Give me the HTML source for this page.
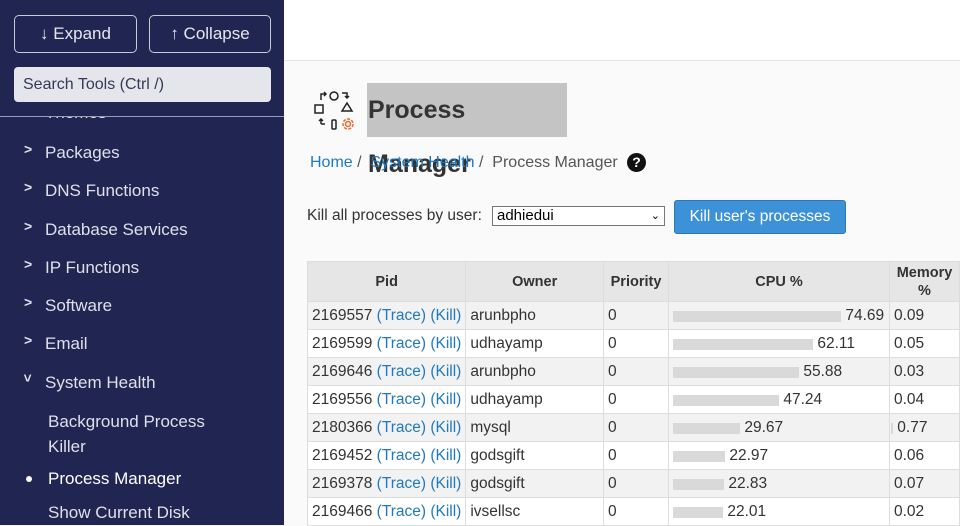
<!DOCTYPE html>
<html><head><style>
*{box-sizing:border-box;margin:0;padding:0}
body{width:960px;height:525px;overflow:hidden;font-family:"Liberation Sans",sans-serif;background:#fafafa;position:relative}
#sb{position:absolute;left:0;top:0;width:284px;height:525px;background:#202552;color:#e6e7ee;overflow:hidden}
.btn{position:absolute;top:15px;height:38px;border:1px solid #c9cbd8;border-radius:5px;color:#e6e7ee;font-size:17px;line-height:36px;text-align:center}
#search{position:absolute;left:14px;top:67px;width:257px;height:35px;background:#e5e6eb;border-radius:4px;color:#333a5a;font-size:16px;line-height:35px;padding-left:9px}
.it{position:absolute;left:45px;font-size:17px;color:#dfe0e8}
.ch{position:absolute;left:24px;font-size:14px;color:#dfe0e8;font-weight:bold}
#hdr{position:absolute;left:284px;top:0;width:676px;height:61px;background:#fff;border-bottom:1px solid #e4e4e4}
table{position:absolute;left:307px;top:261px;border-collapse:collapse;font-size:15.5px;color:#333}
td,th{border:1px solid #ddd;height:28px;padding:0 4px;white-space:nowrap}
th{background:#e6e6e6;font-size:14.5px;height:40px;color:#333}
tr:nth-child(even) td{background:#f2f2f2}
tr:nth-child(odd) td{background:#fff}
a{color:#1f7ac0;text-decoration:none}
.bar{display:inline-block;height:11px;background:#d9d9d9;vertical-align:top;margin-top:4px}
</style></head><body>
<div id="sb">
<div class="btn" style="left:14px;width:123px">↓ Expand</div>
<div class="btn" style="left:149px;width:122px">↑ Collapse</div>
<div id="search">Search Tools (Ctrl /)</div>
<div style="position:absolute;left:0;top:116px;width:284px;height:1px;background:#9a9db5"></div>
<div style="position:absolute;top:117px;left:0;width:284px;height:420px;overflow:hidden">
<div class="ch" style="top:-16px">›</div><div class="it" style="top:-14px">Themes</div>
</div>
<div class="ch" style="top:141px">&gt;</div><div class="it" style="top:143px">Packages</div>
<div class="ch" style="top:179px">&gt;</div><div class="it" style="top:181px">DNS Functions</div>
<div class="ch" style="top:218px">&gt;</div><div class="it" style="top:220px">Database Services</div>
<div class="ch" style="top:256px">&gt;</div><div class="it" style="top:258px">IP Functions</div>
<div class="ch" style="top:294px">&gt;</div><div class="it" style="top:296px">Software</div>
<div class="ch" style="top:332px">&gt;</div><div class="it" style="top:334px">Email</div>
<div class="ch" style="top:370px;transform:rotate(90deg)">&gt;</div><div class="it" style="top:373px">System Health</div>
<div class="it" style="top:409px;left:48px;line-height:25px">Background Process<br>Killer</div>
<div style="position:absolute;left:26px;top:476px;width:6px;height:6px;border-radius:50%;background:#fff"></div>
<div class="it" style="top:469px;left:48px;color:#fff">Process Manager</div>
<div class="it" style="top:503px;left:48px">Show Current Disk</div>
</div>
<div id="hdr"></div>
<svg style="position:absolute;left:312px;top:88px" width="46" height="46" viewBox="0 0 46 46" fill="none" stroke="#222" stroke-width="1.5">
<circle cx="22" cy="8" r="4"/><path d="M9 12V6h5M12 4l2 2-2 2"/><path d="M30 5h5v5M33 8l2 2 2-2"/>
<rect x="3" y="17" width="8" height="8"/><path d="M35 15l-5 8h10z"/>
<path d="M9 36v-5M7 33l2-2 2 2M9 36h4"/><rect x="20" y="32" width="4" height="9" rx="1"/>
<circle cx="36" cy="36" r="2.5" stroke="#e8692b"/><circle cx="36" cy="36" r="5" stroke="#e8692b" stroke-dasharray="3 1.5"/>
</svg>
<div style="position:absolute;left:367px;top:83px;width:200px;height:54px;background:#c4c4c4;font-size:25px;font-weight:bold;color:#333;line-height:54px;padding-left:1px">Process Manager</div>
<div style="position:absolute;left:310px;top:154px;font-size:16px;color:#555"><a>Home</a> / &nbsp;<a>System Health</a> / &nbsp;Process Manager</div>
<div style="position:absolute;left:627px;top:153px;width:19px;height:19px;border-radius:50%;background:#111;color:#fff;font-size:14px;font-weight:bold;text-align:center;line-height:19px">?</div>
<div style="position:absolute;left:307px;top:207px;font-size:15.5px;color:#333">Kill all processes by user:</div>
<div style="position:absolute;left:492px;top:206px;width:173px;height:20px;border:1px solid #777;background:#fff;font-size:15px;line-height:18px;padding-left:4px;color:#000">adhiedui<span style="position:absolute;right:4px;font-size:11px">⌄</span></div>
<div style="position:absolute;left:674px;top:200px;width:172px;height:34px;background:#3d91d6;border:1px solid #2b78b8;border-radius:3px;color:#fff;font-size:15.5px;text-align:center;line-height:32px">Kill user's processes</div>
<table>
<tr><th style="width:158px">Pid</th><th style="width:138px">Owner</th><th style="width:65px">Priority</th><th style="width:221px">CPU %</th><th style="width:70px;line-height:18px">Memory<br>%</th></tr>
<tr><td>2169557 <a>(Trace)</a> <a>(Kill)</a></td><td>arunbpho</td><td>0</td><td><span class="bar" style="width:168px"></span> 74.69</td><td>0.09</td></tr>
<tr><td>2169599 <a>(Trace)</a> <a>(Kill)</a></td><td>udhayamp</td><td>0</td><td><span class="bar" style="width:140px"></span> 62.11</td><td>0.05</td></tr>
<tr><td>2169646 <a>(Trace)</a> <a>(Kill)</a></td><td>arunbpho</td><td>0</td><td><span class="bar" style="width:126px"></span> 55.88</td><td>0.03</td></tr>
<tr><td>2169556 <a>(Trace)</a> <a>(Kill)</a></td><td>udhayamp</td><td>0</td><td><span class="bar" style="width:106px"></span> 47.24</td><td>0.04</td></tr>
<tr><td>2180366 <a>(Trace)</a> <a>(Kill)</a></td><td>mysql</td><td>0</td><td><span class="bar" style="width:67px"></span> 29.67</td><td><span class="bar" style="width:2px;margin-left:-3px"></span> 0.77</td></tr>
<tr><td>2169452 <a>(Trace)</a> <a>(Kill)</a></td><td>godsgift</td><td>0</td><td><span class="bar" style="width:52px"></span> 22.97</td><td>0.06</td></tr>
<tr><td>2169378 <a>(Trace)</a> <a>(Kill)</a></td><td>godsgift</td><td>0</td><td><span class="bar" style="width:51px"></span> 22.83</td><td>0.07</td></tr>
<tr><td>2169466 <a>(Trace)</a> <a>(Kill)</a></td><td>ivsellsc</td><td>0</td><td><span class="bar" style="width:50px"></span> 22.01</td><td>0.02</td></tr>
</table>
</body></html>
